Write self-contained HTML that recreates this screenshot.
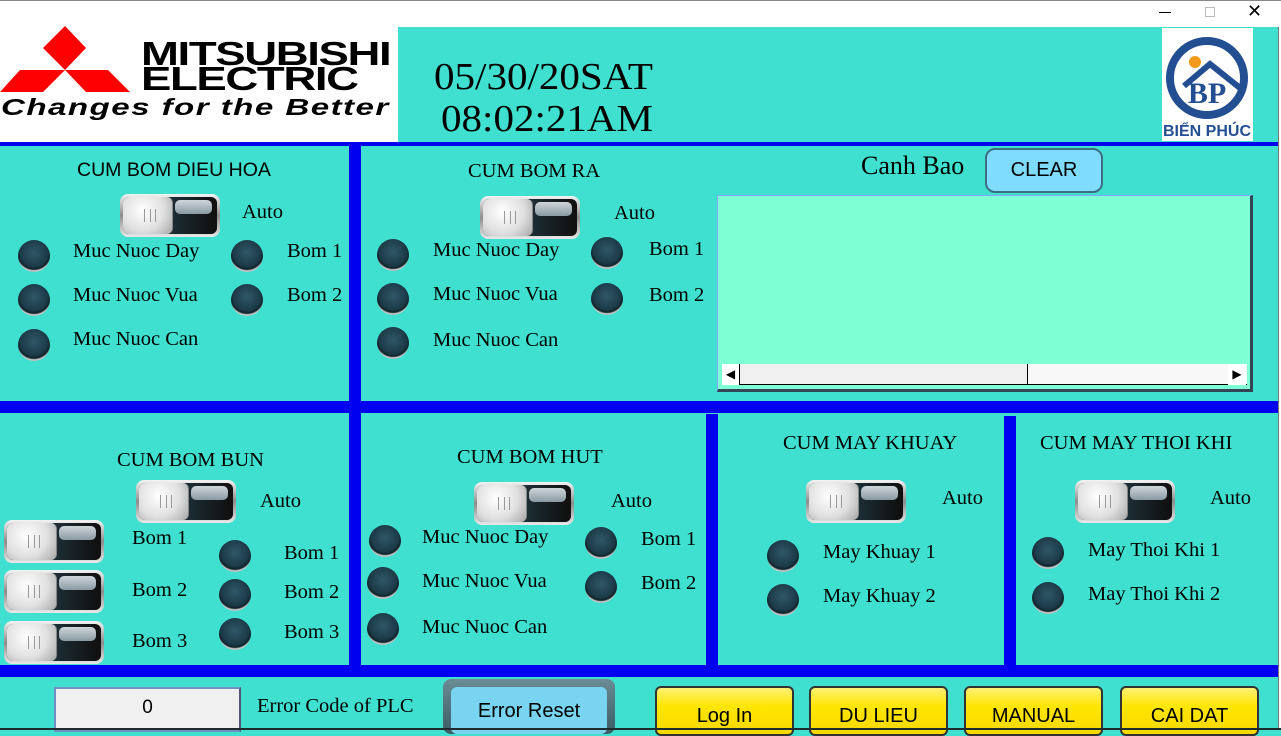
<!DOCTYPE html>
<html><head><meta charset="utf-8"><style>
*{margin:0;padding:0;box-sizing:border-box}
body{width:1281px;height:730px;overflow:hidden;background:#40E0D0;position:relative;font-family:"Liberation Serif",serif;color:#000}
.a{position:absolute}
.bl{position:absolute;background:#0000F0}
.t,.h{position:absolute;font-size:20.5px;line-height:22px;white-space:nowrap;transform:translateY(-11px)}
.lamp{position:absolute;width:32px;height:32px;border-radius:50%;transform:translate(-16px,-16px);
 background:radial-gradient(circle at 50% 40%,#2f5868 0%,#1c3a48 55%,#0f2129 66%,#d0d0d0 72%,#8a8a8a 85%,#444 100%)}
.tg{position:absolute;width:100px;height:43px;border-radius:8px;background:linear-gradient(#f4f4f4,#8c8c8c 50%,#e8e8e8);padding:3px}
.tg i{display:block;width:100%;height:100%;border-radius:6px;background:linear-gradient(90deg,#2a5060,#111 95%);position:relative;overflow:hidden}
.tg i:before{content:"";position:absolute;left:0;top:0;width:52%;height:100%;border-radius:6px;background:radial-gradient(circle at 40% 35%,#fff,#e0e0e0 55%,#a8a8a8);border-right:1px solid #888}
.tg i:after{content:"";position:absolute;left:55%;top:3px;width:40%;height:14px;border-radius:5px;background:linear-gradient(#d0d6da,#8a9aa2)}
.tg b{position:absolute;left:24px;top:15px;width:12px;height:13px;border-left:1px solid #999;border-right:1px solid #999;z-index:2}
.tg b:after{content:"";position:absolute;left:5px;top:0;height:13px;border-left:1px solid #999}
.yb{position:absolute;top:686px;height:50px;width:139px;border-radius:6px;background:linear-gradient(#fff176,#ffe600 40%,#f5d800);border:2px solid #333;font-family:"Liberation Sans",sans-serif;font-size:20px;text-align:center;padding-top:17px}
</style></head><body>
<div class="a" style="left:0;top:0;width:1281px;height:27px;background:#fff;border-top:1px solid #888"></div>
<div class="a" style="left:1159px;top:12px;width:12px;height:1px;background:#000"></div>
<div class="a" style="left:1205px;top:7px;width:10px;height:10px;border:1px solid #bbb"></div>
<div class="a" style="left:1247px;top:1px;font:18px 'Liberation Sans',sans-serif">✕</div>
<div class="a" style="left:1278px;top:27px;width:3px;height:703px;background:#fff;border-left:1px solid #777"></div>
<div class="a" style="left:0;top:27px;width:398px;height:115px;background:#fff"></div>
<svg class="a" style="left:0;top:0" width="132" height="95" viewBox="0 0 132 95">
<polygon points="65,26 86,48 65,70 43,48" fill="#f00"/>
<polygon points="20,70 65,70 43,92 0,92" fill="#f00"/>
<polygon points="65,70 108,70 130,92 86,92" fill="#f00"/></svg>
<div class="a" style="left:141px;top:41px;font:900 33px/25px 'Liberation Sans',sans-serif;letter-spacing:-1px;transform:scaleX(1.38);transform-origin:left">MITSUBISHI<br>ELECTRIC</div>
<div class="a" style="left:1px;top:94px;font:italic 900 23px 'Liberation Sans',sans-serif;letter-spacing:1px;transform:scaleX(1.44);transform-origin:left">Changes for the Better</div>
<div class="a" style="left:434px;top:56px;font-size:38px;line-height:42px;transform:scaleX(1.08);transform-origin:left">05/30/20SAT</div>
<div class="a" style="left:441px;top:98px;font-size:38px;line-height:42px;transform:scaleX(1.08);transform-origin:left">08:02:21AM</div>
<div class="a" style="left:1162px;top:28px;width:91px;height:113px;background:#fff"></div>
<svg class="a" style="left:1162px;top:28px" width="91" height="113">
<circle cx="45" cy="50" r="37" fill="none" stroke="#234f92" stroke-width="8"/>
<polyline points="22,58 48,36 78,60" fill="none" stroke="#234f92" stroke-width="6"/>
<circle cx="33" cy="34" r="6" fill="#f39a1e"/>
<text x="45" y="75" text-anchor="middle" font-family="Liberation Serif,serif" font-size="30" font-weight="bold" fill="#234f92">BP</text>
<text x="45" y="108" text-anchor="middle" font-family="Liberation Sans,sans-serif" font-size="16" font-weight="bold" fill="#234f92">BIỂN PHÚC</text>
</svg>
<div class="bl" style="left:0;top:142px;width:1278px;height:4px"></div>
<div class="bl" style="left:349px;top:146px;width:12px;height:255px"></div>
<div class="bl" style="left:0;top:401px;width:1278px;height:12px"></div>
<div class="bl" style="left:349px;top:413px;width:12px;height:252px"></div>
<div class="bl" style="left:706px;top:414px;width:12px;height:251px"></div>
<div class="bl" style="left:1004px;top:416px;width:12px;height:249px"></div>
<div class="bl" style="left:0;top:665px;width:1278px;height:12px"></div>
<div class="h" style="left:77px;top:170px;font-family:'Liberation Sans',sans-serif;font-size:19.5px">CUM BOM DIEU HOA</div>
<div class="tg" style="left:120px;top:194px"><i></i><b></b></div>
<div class="t" style="left:242px;top:212px">Auto</div>
<div class="lamp" style="left:34px;top:256px"></div><div class="lamp" style="left:34px;top:300px"></div><div class="lamp" style="left:34px;top:345px"></div>
<div class="lamp" style="left:247px;top:256px"></div><div class="lamp" style="left:247px;top:300px"></div>
<div class="t" style="left:73px;top:251px">Muc Nuoc Day</div><div class="t" style="left:73px;top:295px">Muc Nuoc Vua</div><div class="t" style="left:73px;top:339px">Muc Nuoc Can</div>
<div class="t" style="left:287px;top:251px">Bom 1</div><div class="t" style="left:287px;top:295px">Bom 2</div>
<div class="h" style="left:468px;top:171px">CUM BOM RA</div>
<div class="tg" style="left:480px;top:196px"><i></i><b></b></div>
<div class="t" style="left:614px;top:213px">Auto</div>
<div class="lamp" style="left:393px;top:255px"></div><div class="lamp" style="left:393px;top:299px"></div><div class="lamp" style="left:393px;top:343px"></div>
<div class="lamp" style="left:607px;top:253px"></div><div class="lamp" style="left:607px;top:299px"></div>
<div class="t" style="left:433px;top:250px">Muc Nuoc Day</div><div class="t" style="left:433px;top:294px">Muc Nuoc Vua</div><div class="t" style="left:433px;top:340px">Muc Nuoc Can</div>
<div class="t" style="left:649px;top:249px">Bom 1</div><div class="t" style="left:649px;top:295px">Bom 2</div>
<div class="a" style="left:861px;top:151px;font-size:26px">Canh Bao</div>
<div class="a" style="left:985px;top:148px;width:118px;height:45px;border-radius:10px;background:#80dcff;border:2px solid #3d6f80;font:20px/41px 'Liberation Sans',sans-serif;text-align:center">CLEAR</div>
<div class="a" style="left:717px;top:195px;width:536px;height:197px;background:#7fffd4;border:1px solid #8aa8ff;border-right:3px solid #345;border-bottom:3px solid #345"></div>
<div class="a" style="left:722px;top:364px;width:525px;height:21px;background:#f8f8f8;border-bottom:1px solid #000"></div>
<div class="a" style="left:722px;top:364px;width:18px;height:21px;background:#fff;border-right:1px solid #000;font:12px/21px sans-serif;text-align:center">◀</div>
<div class="a" style="left:740px;top:364px;width:288px;height:20px;background:#f0f0f0;border-right:1px solid #000"></div>
<div class="a" style="left:1228px;top:364px;width:18px;height:21px;background:#fff;font:12px/21px sans-serif;text-align:center">▶</div>
<div class="h" style="left:117px;top:460px">CUM BOM BUN</div>
<div class="tg" style="left:136px;top:480px"><i></i><b></b></div>
<div class="t" style="left:260px;top:501px">Auto</div>
<div class="tg" style="left:4px;top:520px"><i></i><b></b></div>
<div class="tg" style="left:4px;top:570px"><i></i><b></b></div>
<div class="tg" style="left:4px;top:621px"><i></i><b></b></div>
<div class="t" style="left:132px;top:538px">Bom 1</div><div class="t" style="left:132px;top:590px">Bom 2</div><div class="t" style="left:132px;top:641px">Bom 3</div>
<div class="lamp" style="left:235px;top:556px"></div><div class="lamp" style="left:235px;top:595px"></div><div class="lamp" style="left:235px;top:634px"></div>
<div class="t" style="left:284px;top:553px">Bom 1</div><div class="t" style="left:284px;top:592px">Bom 2</div><div class="t" style="left:284px;top:632px">Bom 3</div>
<div class="h" style="left:457px;top:457px">CUM BOM HUT</div>
<div class="tg" style="left:474px;top:482px"><i></i><b></b></div>
<div class="t" style="left:611px;top:501px">Auto</div>
<div class="lamp" style="left:385px;top:541px"></div><div class="lamp" style="left:383px;top:583px"></div><div class="lamp" style="left:383px;top:629px"></div>
<div class="lamp" style="left:601px;top:543px"></div><div class="lamp" style="left:601px;top:587px"></div>
<div class="t" style="left:422px;top:537px">Muc Nuoc Day</div><div class="t" style="left:422px;top:581px">Muc Nuoc Vua</div><div class="t" style="left:422px;top:627px">Muc Nuoc Can</div>
<div class="t" style="left:641px;top:539px">Bom 1</div><div class="t" style="left:641px;top:583px">Bom 2</div>
<div class="h" style="left:783px;top:443px">CUM MAY KHUAY</div>
<div class="tg" style="left:806px;top:480px"><i></i><b></b></div>
<div class="t" style="left:942px;top:498px">Auto</div>
<div class="lamp" style="left:783px;top:556px"></div><div class="lamp" style="left:783px;top:600px"></div>
<div class="t" style="left:823px;top:552px">May Khuay 1</div><div class="t" style="left:823px;top:596px">May Khuay 2</div>
<div class="h" style="left:1040px;top:443px">CUM MAY THOI KHI</div>
<div class="tg" style="left:1075px;top:480px"><i></i><b></b></div>
<div class="t" style="left:1210px;top:498px">Auto</div>
<div class="lamp" style="left:1048px;top:553px"></div><div class="lamp" style="left:1048px;top:598px"></div>
<div class="t" style="left:1088px;top:550px">May Thoi Khi 1</div><div class="t" style="left:1088px;top:594px">May Thoi Khi 2</div>
<div class="a" style="left:54px;top:687px;width:187px;height:45px;background:#f0f0f0;border:2px solid #7090c0;border-right-color:#557;font:19px/38px 'Liberation Sans',sans-serif;text-align:center">0</div>
<div class="a" style="left:257px;top:695px;font-size:20.5px">Error Code of PLC</div>
<div class="a" style="left:443px;top:679px;width:172px;height:55px;border-radius:8px;background:linear-gradient(#6a8c94,#3c5c66);padding:8px 8px 0"><div style="height:100%;border-radius:6px;background:#78d4f0;font:20px/48px 'Liberation Sans',sans-serif;text-align:center">Error Reset</div></div>
<div class="yb" style="left:655px">Log In</div>
<div class="yb" style="left:809px">DU LIEU</div>
<div class="yb" style="left:964px">MANUAL</div>
<div class="yb" style="left:1120px">CAI DAT</div>
<div class="a" style="left:0;top:728px;width:1281px;height:2px;background:#1c2c2c"></div>
</body></html>
